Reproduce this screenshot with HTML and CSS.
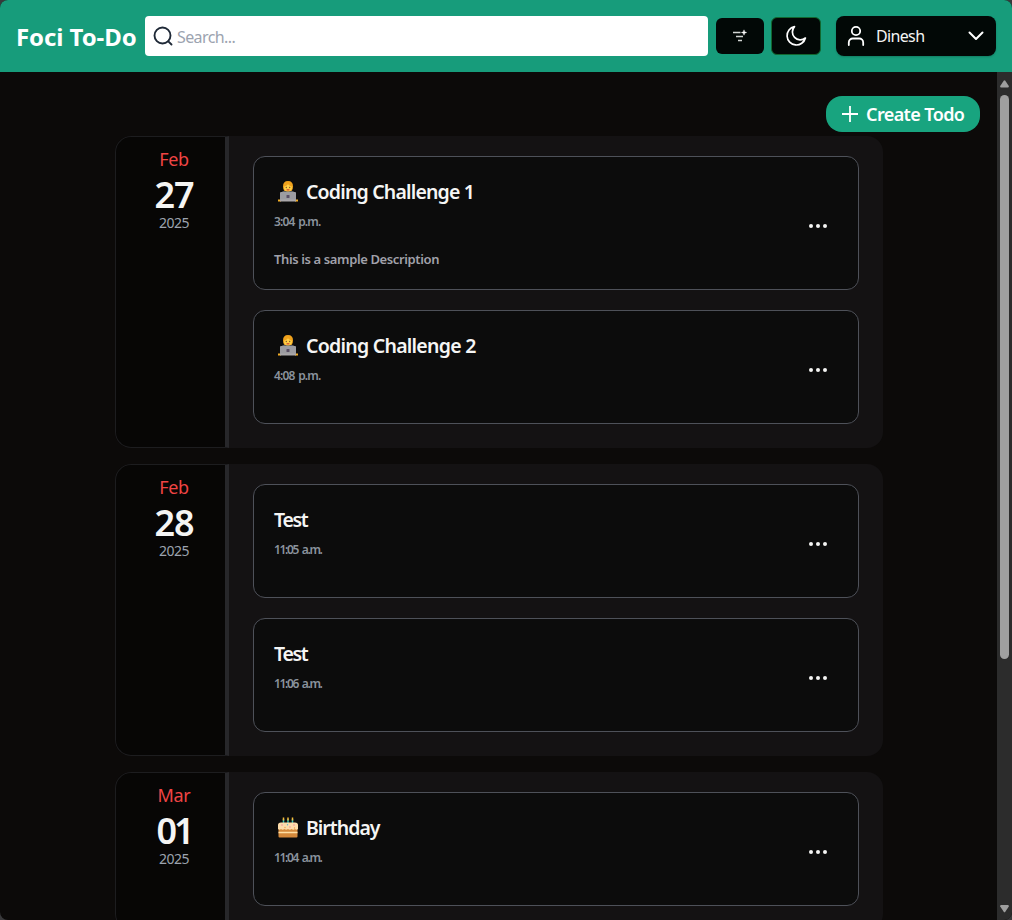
FILE: index.html
```
<!DOCTYPE html>
<html lang="en">
<head>
<meta charset="utf-8">
<title>Foci To-Do</title>
<link rel="stylesheet" href="styles.css">
</head>
<body>
<svg class="defs" width="0" height="0" aria-hidden="true">
  <symbol id="dots" viewBox="0 0 20 6"><circle cx="3" cy="3" r="2"/><circle cx="10" cy="3" r="2"/><circle cx="17" cy="3" r="2"/></symbol>
  <symbol id="coder" viewBox="0 0 24 24">
    <path d="M5 19v-5q0-3.500 5-3.500h4q5 0 5 3.500v5z" fill="#5d6063"/>
    <path d="M7 6.500Q7 1 12 1t5 5.500q0 3.500-1.500 4.500h-7Q7 10 7 6.500z" fill="#f0a21c"/>
    <path d="M8 6.800Q10.500 6 12 4.200q1.500 1.800 4 2.600.2 4.700-4 4.700T8 6.800z" fill="#ffce45"/>
    <circle cx="10.300" cy="7.500" r=".65" fill="#7a5423"/><circle cx="13.700" cy="7.500" r=".65" fill="#7a5423"/>
    <path d="M10.600 9.800h2.800" stroke="#d8452e" stroke-width="1.200"/>
    <path d="M2 19.500h3v2H2zM19 19.500h3v2h-3z" fill="#f3ae26"/>
    <rect x="4" y="12" width="16" height="8.500" rx="1" fill="#9c9ca1"/>
    <rect x="4" y="19.500" width="16" height="2" fill="#aaa7aa"/>
    <rect x="10.500" y="15" width="3" height="3" rx=".5" fill="#594f65"/>
  </symbol>
  <symbol id="cake" viewBox="0 0 24 24">
    <path d="M7.500 3v5M12 3v5M16.500 3v5" stroke="#28b8b5" stroke-width="1.500"/>
    <path d="M7.500 1.500v3M12 1.500v3M16.500 1.500v3" stroke="#f8bd3b" stroke-width="1.500"/>
    <rect x="2.500" y="12" width="19" height="9.500" rx="1" fill="#d58a3c"/>
    <path d="M2.500 16.500h19" stroke="#ffe0a5" stroke-width="1.600"/>
    <path d="M2 9q0-2.500 3-2.500h14q3 0 3 2.500v4q-1.500 1.500-3 0-1.500 1.500-3.500 0-1.800 1.500-3.500 0-1.800 1.500-3.500 0-2 1.500-3.500 0-1.500 1.500-3 0z" fill="#fddcaa"/>
    <g fill="#ef7fa0"><circle cx="6" cy="9" r=".7"/><circle cx="14" cy="11" r=".7"/><circle cx="18" cy="9" r=".7"/></g>
    <g fill="#f19a48"><circle cx="9" cy="11.500" r=".7"/><circle cx="18.500" cy="12" r=".7"/></g><circle cx="11.500" cy="8.700" r=".7" fill="#52b9d3"/>
  </symbol>
</svg>
<div class="app">
  <header class="topbar">
    <h1 class="brand">Foci To-Do</h1>
    <div class="search">
      <svg class="search-icon" width="24" height="24" viewBox="0 0 24 24" fill="none" stroke="#1f2937" stroke-width="1.900" stroke-linecap="round"><circle cx="11.500" cy="11.500" r="8"/><path d="M17.300 17.300 20.500 20.500"/></svg>
      <span class="placeholder">Search...</span>
    </div>
    <button class="btn filter" aria-label="Filter"><svg width="16" height="14" viewBox="0 0 16 14" fill="none" stroke="#d2d5d3" stroke-width="1.400"><path d="M1 3.500h7.500M4 7.500h7M6 11.500h4"/><path d="M12 .8 12.700 2.800 14.700 3.500 12.700 4.200 12 6.200 11.300 4.200 9.300 3.500 11.300 2.800z" fill="#fff" stroke="#fff" stroke-width=".4"/></svg></button>
    <button class="btn theme" aria-label="Theme"><svg width="24" height="24" viewBox="0 0 24 24" fill="none" stroke="#fff" stroke-width="1.700" stroke-linejoin="round"><path d="M10.500 2.600A9.300 9.300 0 1 0 21.400 14 7.900 7.900 0 0 1 10.500 2.600z"/></svg></button>
    <button class="user">
      <svg width="20" height="24" viewBox="0 0 20 24" fill="none" stroke="#fff" stroke-width="1.800" stroke-linecap="round"><circle cx="10" cy="7" r="4.200"/><path d="M2.800 21v-2.500a4 4 0 0 1 4-4h6.400a4 4 0 0 1 4 4V21"/></svg>
      <span class="user-name">Dinesh</span>
      <svg class="chev" width="16" height="10" viewBox="0 0 16 10" fill="none" stroke="#fff" stroke-width="2" stroke-linecap="round" stroke-linejoin="round"><path d="m1.500 1.500 6.500 6.500 6.500-6.500"/></svg>
    </button>
  </header>
  <div class="body">
    <main class="main">
      <div class="actions">
        <button class="create"><svg width="16" height="16" viewBox="0 0 16 16" stroke="#fff" stroke-width="1.800"><path d="M8 0v16M0 8h16"/></svg><span>Create Todo</span></button>
      </div>
      <div class="days">
        <section class="day">
          <div class="date"><span class="month">Feb</span><span class="num">27</span><span class="year">2025</span></div>
          <div class="cards">
            <article class="card tall"><div><h2 class="title"><svg class="emoji"><use href="#coder"/></svg>Coding Challenge 1</h2><p class="time">3:04 p.m.</p><p class="desc">This is a sample Description</p></div><svg class="more"><use href="#dots"/></svg></article>
            <article class="card"><div><h2 class="title even"><svg class="emoji"><use href="#coder"/></svg>Coding Challenge 2</h2><p class="time">4:08 p.m.</p></div><svg class="more"><use href="#dots"/></svg></article>
          </div>
        </section>
        <section class="day">
          <div class="date"><span class="month">Feb</span><span class="num">28</span><span class="year">2025</span></div>
          <div class="cards">
            <article class="card"><div><h2 class="title short">Test</h2><p class="time narrow">11:05 a.m.</p></div><svg class="more"><use href="#dots"/></svg></article>
            <article class="card"><div><h2 class="title short">Test</h2><p class="time narrow">11:06 a.m.</p></div><svg class="more"><use href="#dots"/></svg></article>
          </div>
        </section>
        <section class="day">
          <div class="date"><span class="month">Mar</span><span class="num tight">01</span><span class="year">2025</span></div>
          <div class="cards">
            <article class="card"><div><h2 class="title plain"><svg class="emoji"><use href="#cake"/></svg>Birthday</h2><p class="time narrow">11:04 a.m.</p></div><svg class="more"><use href="#dots"/></svg></article>
          </div>
        </section>
      </div>
    </main>
    <div class="scroll">
      <svg width="9" height="8" viewBox="0 0 9 8"><path d="M3.700.8q.8-1 1.600 0L8.800 6q.3 1.500-1 1.500H1.200Q-.1 7.500.2 6z" fill="#9f9f9f"/></svg>
      <div class="thumb"></div>
      <svg class="down" width="9" height="8" viewBox="0 0 9 8"><path d="M3.700 6.700q.8 1 1.600 0L8.800 1.500Q9.100 0 7.800 0H1.200Q-.1 0 .2 1.500z" fill="#9f9f9f"/></svg>
    </div>
  </div>
</div>
</body>
</html>
```
FILE: styles.css
```
* { box-sizing: border-box; }
body { margin: 0; background: #39393b; overflow: hidden; font-family: "Noto Sans", "Open Sans", sans-serif; color: #f5f5f4; }
h1, h2, p { margin: 0; }
button { border: 0; padding: 0; font: inherit; color: inherit; }
svg { display: block; flex: none; }
.defs { position: absolute; }
.app { width: 1012px; height: 920px; border-radius: 8px; overflow: hidden; display: flex; flex-direction: column; background: #0c0a09; }
.topbar { height: 72px; flex: none; background: #179c7b; display: flex; align-items: center; padding: 0 16px; }
.brand { width: 129px; font-size: 24px; line-height: 32px; font-weight: 700; color: #fff; letter-spacing: -.08px; white-space: nowrap; padding-top: 2px; }
.search { width: 563px; height: 40px; background: #fff; border-radius: 4px; display: flex; align-items: center; padding: 2px 0 0 6px; }
.search-icon { margin-top: -2px; }
.placeholder { margin-left: 2px; color: #9ca3af; font-size: 16px; letter-spacing: -.6px; }
.btn { height: 36px; width: 48px; margin-left: 8px; background: #020806; border-radius: 6px; display: grid; place-items: center; }
.theme { width: 50px; height: 38px; margin-left: 7px; border: 1px solid #12672f; }
.theme svg { margin-right: 1px; }
.user { width: 160px; height: 40px; margin-left: 15px; background: #020806; border-radius: 8px; display: flex; align-items: center; padding: 0 12px 0 10px; box-shadow: 0 1px 2px rgba(0,0,0,.2); }
.user-name { margin-left: 10px; font-size: 16px; letter-spacing: -.65px; }
.chev { margin-left: auto; }
.body { flex: 1; min-height: 0; display: flex; }
.main { width: 997px; padding-top: 24px; overflow: hidden; }
.actions { display: flex; justify-content: flex-end; padding-right: 17px; height: 40px; }
.create { width: 154px; height: 36px; border-radius: 16px; background: #18a47f; display: flex; align-items: center; padding-left: 16px; gap: 8px; font-size: 18px; font-weight: 600; letter-spacing: -.6px; white-space: nowrap; color: #fff; }
.days { width: 768px; margin-left: 115px; display: flex; flex-direction: column; gap: 16px; }
.day { display: flex; background: #141213; border-radius: 16px; overflow: hidden; }
.date { width: 114px; border: 1px solid #1d1d1f; border-right: 4px solid #27272a; border-radius: 16px 0 0 16px; background: #070605; display: flex; flex-direction: column; align-items: center; padding: 8px 0 0 7px; }
.month { color: #ef4444; font-size: 18px; line-height: 28px; letter-spacing: -.3px; }
.num { font-size: 36px; line-height: 36px; font-weight: 600; letter-spacing: -1.2px; margin-top: 4px; }
.num.tight { letter-spacing: -3px; }
.year { color: #9ca3af; font-size: 14px; line-height: 20px; letter-spacing: -.5px; }
.cards { flex: 1; padding: 20px 24px 24px; display: flex; flex-direction: column; gap: 20px; }
.card { height: 114px; border: 1px solid #4e5159; border-radius: 12px; background: #0c0c0c; padding: 20px 30px 0 20px; display: flex; justify-content: space-between; }
.card.tall { height: 134px; }
.title { display: flex; align-items: center; font-size: 19.5px; line-height: 30px; height: 30px; font-weight: 600; letter-spacing: -.82px; white-space: nowrap; }
.title.even { letter-spacing: -.74px; }
.title.plain { letter-spacing: -1px; }
.title.short { letter-spacing: -1.3px; }
.emoji { width: 24px; height: 24px; margin: 0 6px 0 2px; }
.time { color: #8b939d; font-size: 12px; line-height: 16px; font-weight: 600; letter-spacing: -.85px; word-spacing: 1.4px; margin-top: 7px; }
.time.narrow { letter-spacing: -1.35px; word-spacing: 2px; }
.desc { color: #a1a1aa; font-size: 13px; line-height: 20px; font-weight: 600; letter-spacing: -.38px; margin-top: 19px; }
.more { width: 20px; height: 6px; fill: #f5f5f4; margin-top: 36px; }
.tall .more { margin-top: 46px; }
.scroll { width: 15px; background: #2c2c2c; display: flex; flex-direction: column; align-items: center; padding: 8px 0 7px; }
.thumb { width: 9px; height: 564px; border-radius: 5px; background: #9f9f9f; margin-top: 7px; }
.down { margin-top: auto; }
```
